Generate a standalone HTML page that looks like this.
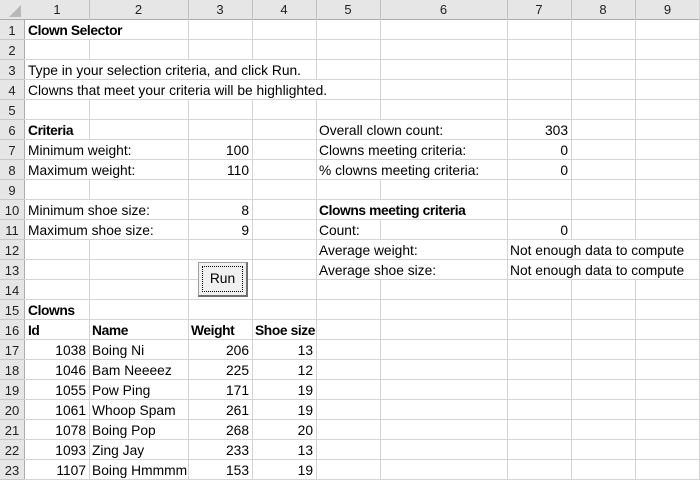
<!DOCTYPE html><html><head><style>
body{margin:0;width:700px;height:480px;overflow:hidden;background:#fff;font-family:"Liberation Sans",sans-serif;font-size:13.8px;color:#000;position:relative}
.vl{position:absolute;top:0;height:480px;width:1px;background:#d4d4d4}
.hl{position:absolute;left:0;width:700px;height:1px;background:#d4d4d4}
.t{position:absolute;height:19px;line-height:21px;white-space:nowrap}
.w{background:#fff;padding-right:2px}
.r{text-align:right}
b{font-weight:bold;letter-spacing:-0.4px}
#hdr{position:absolute;left:0;top:0;width:700px;height:19px;background:#e6e6e6;border-bottom:1px solid #ababab}
#rh{position:absolute;left:0;top:0;width:24px;height:480px;background:#e6e6e6;border-right:1px solid #ababab}
.ch{position:absolute;top:0;height:19px;line-height:20px;text-align:center;color:#222;font-size:13px}
.rn{position:absolute;left:0;width:24px;height:20px;line-height:21px;text-align:center;color:#222;font-size:13px}
.hs{position:absolute;top:0;height:19px;width:1px;background:#c0c0c0}
.rs{position:absolute;left:0;width:24px;height:1px;background:#c8c8c8}
</style></head><body>
<div id="rh"></div><div id="hdr"></div>
<svg style="position:absolute;left:6px;top:4px" width="16" height="14"><polygon points="15,1 15,13 3,13" fill="#b8b8b8"/></svg>
<div class="vl" style="left:89px"></div><div class="vl" style="left:188px"></div><div class="vl" style="left:252px"></div><div class="vl" style="left:316px"></div><div class="vl" style="left:380px"></div><div class="vl" style="left:507px"></div><div class="vl" style="left:571px"></div><div class="vl" style="left:635px"></div><div class="vl" style="left:699px"></div>
<div id="hl"></div>
<script>
var s='';for(var i=1;i<=23;i++){var y=20+i*20-1;s+='<div class="hl" style="top:'+y+'px"></div><div class="rs" style="top:'+y+'px"></div><div class="rn" style="top:'+(y-19)+'px">'+i+'</div>';}
var c=[25,89,188,252,316,380,507,571,635,700];for(var j=0;j<9;j++){s+='<div class="ch" style="left:'+c[j]+'px;width:'+(c[j+1]-c[j])+'px">'+(j+1)+'</div><div class="hs" style="left:'+c[j+1]+'px"></div>';}
document.getElementById('hl').outerHTML=s;
</script>
<div class="t w" style="left:28px;top:20px"><b>Clown Selector</b></div>
<div class="t w" style="left:28px;top:60px">Type in your selection criteria, and click Run.</div>
<div class="t w" style="left:28px;top:80px">Clowns that meet your criteria will be highlighted.</div>
<div class="t" style="left:28px;top:120px"><b>Criteria</b></div>
<div class="t w" style="left:28px;top:140px">Minimum weight:</div><div class="t r" style="left:188px;width:61px;top:140px">100</div>
<div class="t w" style="left:28px;top:160px">Maximum weight:</div><div class="t r" style="left:188px;width:61px;top:160px">110</div>
<div class="t w" style="left:28px;top:200px">Minimum shoe size:</div><div class="t r" style="left:188px;width:61px;top:200px">8</div>
<div class="t w" style="left:28px;top:220px">Maximum shoe size:</div><div class="t r" style="left:188px;width:61px;top:220px">9</div>
<div class="t w" style="left:319px;top:120px">Overall clown count:</div><div class="t r" style="left:507px;width:61px;top:120px">303</div>
<div class="t w" style="left:319px;top:140px">Clowns meeting criteria:</div><div class="t r" style="left:507px;width:61px;top:140px">0</div>
<div class="t w" style="left:319px;top:160px">% clowns meeting criteria:</div><div class="t r" style="left:507px;width:61px;top:160px">0</div>
<div class="t w" style="left:319px;top:200px"><b>Clowns meeting criteria</b></div>
<div class="t" style="left:319px;top:220px">Count:</div><div class="t r" style="left:507px;width:61px;top:220px">0</div>
<div class="t w" style="left:319px;top:240px">Average weight:</div><div class="t w" style="left:510px;top:240px">Not enough data to compute</div>
<div class="t w" style="left:319px;top:260px">Average shoe size:</div><div class="t w" style="left:510px;top:260px">Not enough data to compute</div>
<div style="position:absolute;left:198px;top:262px;width:47px;height:32px;background:#f0f0f0;border:1px solid #a0a0a0;border-right:2px solid #707070;border-bottom:2px solid #707070"><div style="position:absolute;left:3px;top:3px;right:3px;bottom:3px;border:1px dotted #000;text-align:center;line-height:24px">Run</div></div>
<div class="t" style="left:28px;top:300px"><b>Clowns</b></div>
<div class="t" style="left:28px;top:320px"><b>Id</b></div><div class="t" style="left:92px;top:320px"><b>Name</b></div><div class="t" style="left:191px;top:320px"><b>Weight</b></div><div class="t" style="left:255px;top:320px"><b>Shoe size</b></div>
<script>
var d=[[1038,'Boing Ni',206,13],[1046,'Bam Neeeez',225,12],[1055,'Pow Ping',171,19],[1061,'Whoop Spam',261,19],[1078,'Boing Pop',268,20],[1093,'Zing Jay',233,13],[1107,'Boing Hmmmm',153,19]];
var h='';d.forEach(function(r,i){var y=340+i*20;h+='<div class="t r" style="left:25px;width:61px;top:'+y+'px">'+r[0]+'</div><div class="t" style="left:92px;top:'+y+'px">'+r[1]+'</div><div class="t r" style="left:188px;width:61px;top:'+y+'px">'+r[2]+'</div><div class="t r" style="left:252px;width:61px;top:'+y+'px">'+r[3]+'</div>';});
document.write(h);
</script>
</body></html>
